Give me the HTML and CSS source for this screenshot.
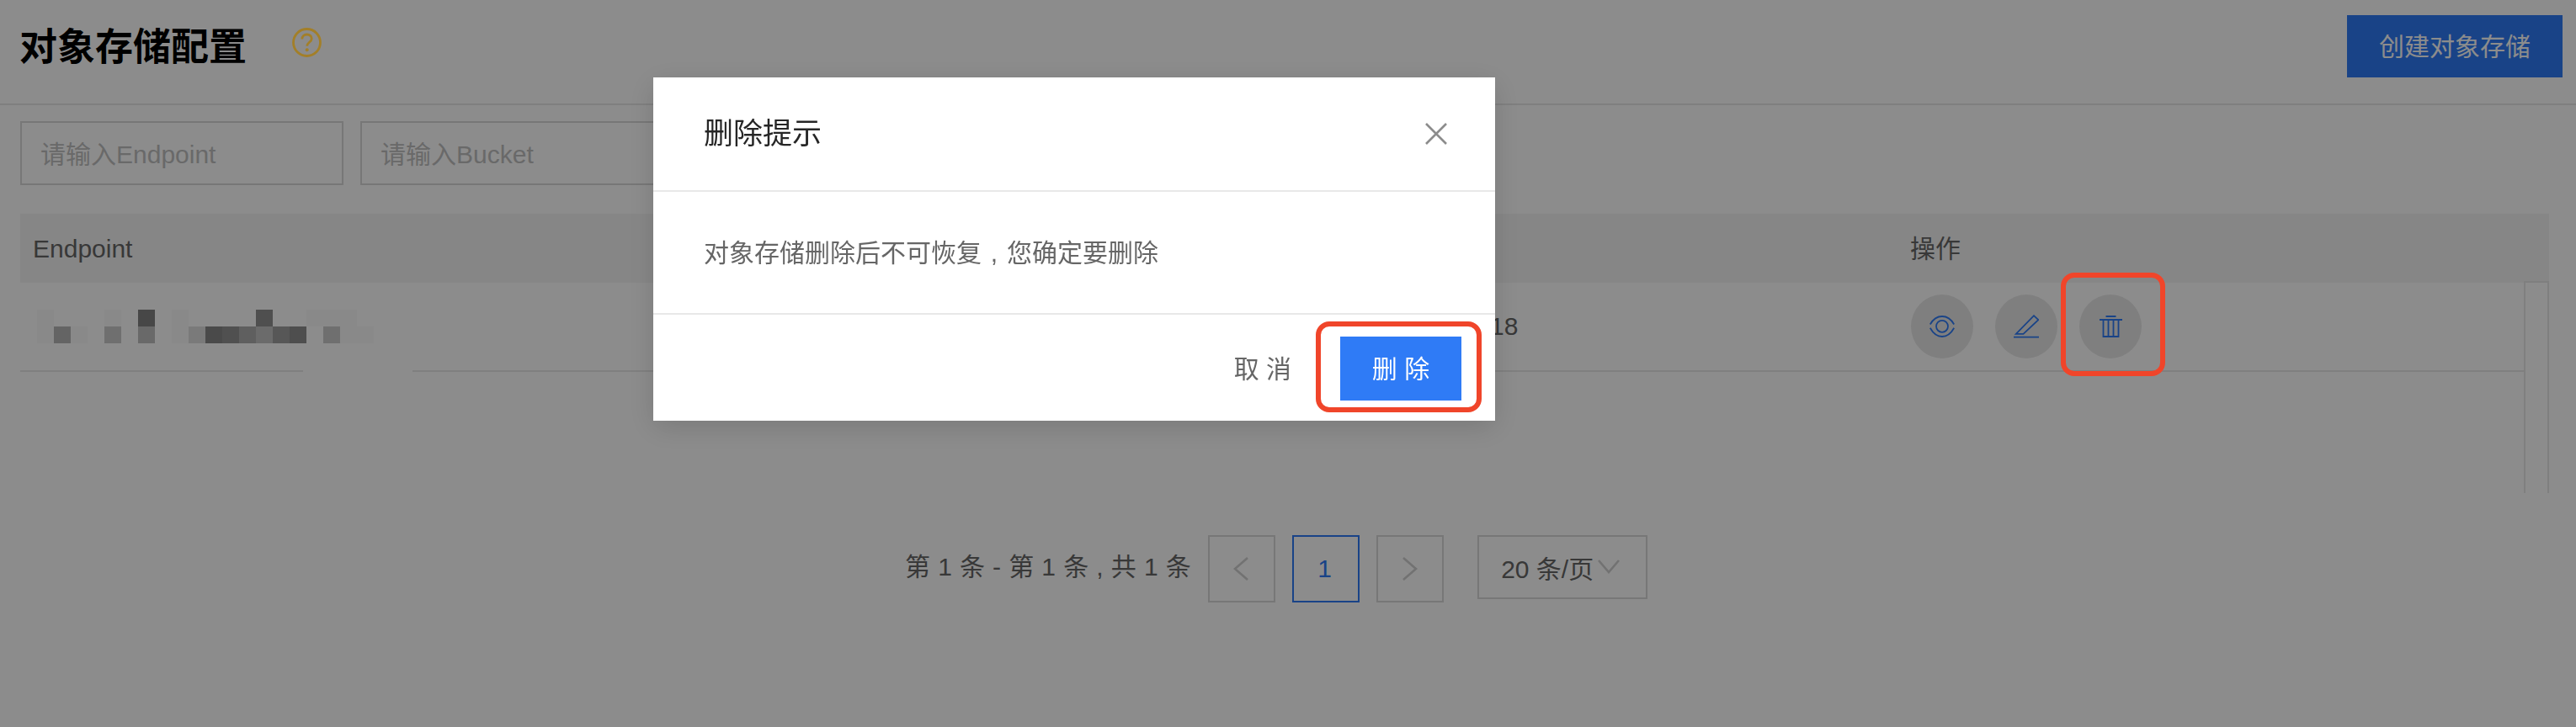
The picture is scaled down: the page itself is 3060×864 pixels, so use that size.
FILE: index.html
```html
<!DOCTYPE html>
<html lang="zh-CN">
<head>
<meta charset="utf-8">
<title>对象存储配置</title>
<link rel="stylesheet" href="styles.css">
</head>
<body>
<main class="page">
  <header class="top">
    <div class="top-left">
      <h1 class="title">对象存储配置</h1>
      <svg class="help" viewBox="0 0 35 35" fill="none"><circle cx="17.5" cy="17.5" r="16" stroke-width="2.8"/><path d="M11.8 13.6c0-3.400 2.500-5.600 5.800-5.600 3.300 0 5.600 2.100 5.600 4.900 0 4.200-5.500 4.500-5.500 8.800" stroke-width="2.800"/><circle class="help-dot" cx="17.700" cy="26.300" r="2"/></svg>
    </div>
    <button class="btn-primary create">创建对象存储</button>
  </header>

  <section class="filters">
    <input class="field" placeholder="请输入Endpoint">
    <input class="field" placeholder="请输入Bucket">
  </section>

  <section class="table">
    <div class="thead cols">
      <span class="th">Endpoint</span>
      <span class="th">创建时间</span>
      <span class="th th-ops">操作</span>
    </div>
    <div class="tbody">
      <div class="row cols">
        <div class="mosaic">
          <i class="f"></i><i></i><i></i><i></i><i class="f"></i><i></i><i class="a"></i><i></i><i class="f"></i><i></i><i></i><i></i><i></i><i class="b"></i><i></i><i></i><i class="f"></i><i class="f"></i><i class="f"></i><i></i>
          <i class="f"></i><i class="g"></i><i class="f"></i><i></i><i class="h"></i><i></i><i class="j"></i><i></i><i class="f"></i><i class="k"></i><i class="c"></i><i class="d"></i><i class="l"></i><i class="m"></i><i class="e"></i><i class="n"></i><i></i><i class="h"></i><i class="f"></i><i class="f"></i>
        </div>
        <span class="td">2021-11-25 17:30:18</span>
        <div class="ops">
          <button class="op"><svg class="ico" width="30" height="26" viewBox="0 0 30 26" fill="none"><path d="M.8 10.500C4.500 4 9.500 1 15 1s10.500 3 14.200 9.500M.8 14.800C4.500 21.500 9.500 25 15 25s10.500-3.500 14.200-10.200"/><circle cx="15" cy="12.800" r="7"/></svg></button>
          <button class="op"><svg class="ico" width="30" height="28" viewBox="0 0 30 28" fill="none"><path d="M2.800 22.800 24 1.200l5.300 5L11.500 22.800zM0 26.700h30"/></svg></button>
          <button class="op"><svg class="ico" width="27" height="26" viewBox="0 0 27 26" fill="none"><path d="M7.500 1h12M0 5h27M4.500 5v20h18V5M10.500 5v20M16.500 5v20"/></svg></button>
        </div>
      </div>
      <span class="line-gap"></span>
      <div class="scrollbar"></div>
    </div>
  </section>

  <nav class="pager">
    <span class="pager-total">第 1 条 - 第 1 条 , 共 1 条</span>
    <span class="pg"><svg class="chev chev-prev" width="18" height="28" viewBox="0 0 18 28" fill="none"><path d="M17 1 2 14l15 13"/></svg></span>
    <span class="pg pg-on">1</span>
    <span class="pg"><svg class="chev" width="18" height="28" viewBox="0 0 18 28" fill="none"><path d="m1 1 15 13L1 27"/></svg></span>
    <span class="size">20 条/页<svg class="chev chev-size" width="26" height="17" viewBox="0 0 26 17" fill="none"><path d="m1 1 12 14L25 1"/></svg></span>
  </nav>
</main>

<div class="mask"></div>

<div class="modal">
  <div class="modal-head">
    <span class="modal-title">删除提示</span>
    <svg class="close" width="26" height="26" viewBox="0 0 26 26" fill="none"><path d="m1 1 24 24M25 1 1 25"/></svg>
  </div>
  <div class="modal-body"><span>对象存储删除后不可恢复<span class="comma">,</span>您确定要删除</span></div>
  <div class="modal-foot">
    <button class="btn-text">取 消</button>
    <button class="btn-primary confirm">删 除</button>
  </div>
</div>

<div class="mark mark-trash"></div>
<div class="mark mark-confirm"></div>
</body>
</html>
```
FILE: styles.css
```css
* { box-sizing: border-box; }
html, body { margin: 0; height: 100%; background: #fff; overflow: hidden; }
body, button, input {
  font-family: "Liberation Sans", "Noto Sans CJK SC", sans-serif;
  font-size: 30px;
}
button { border: 0; padding: 0; background: none; }

.top {
  height: 125px;
  padding: 18px 16px 0 23px;
  border-bottom: 2px solid #e8e8e8;
  display: flex;
  justify-content: space-between;
  align-items: flex-start;
}
.top-left { display: flex; align-items: flex-start; gap: 54px; }
.title { margin: 10px 0 0; font-size: 45px; line-height: 58px; font-weight: 700; color: #000; }
.help {
  width: 35px; height: 35px; margin-top: 15px;
  stroke: #a37f28;
  position: relative; z-index: 2;
}
.help-dot { fill: #a37f28; stroke: none; }

.btn-primary { background: #2f7bf6; color: #fff; height: 74px; }
.create { width: 256px; padding-bottom: 4px; }

.filters { display: flex; gap: 20px; padding: 19px 24px 0; }
.field {
  width: 384px; height: 76px;
  border: 2px solid #d9d9d9;
  padding: 4px 22px 0;
  outline: 0;
  color: #555;
}
.field::placeholder { color: #bfbfbf; opacity: 1; }

.table { margin: 34px 32px 0 24px; }
.cols { display: grid; grid-template-columns: 1500px 745px 1fr; align-items: center; }
.thead { height: 82px; background: #f5f5f5; }
.th { padding: 2px 0 0 15px; color: #666; line-height: 36px; }
.th-ops { padding-left: 0; }
.tbody { position: relative; height: 250px; padding-right: 30px; }
.row { height: 106px; border-bottom: 2px solid #e8e8e8; }
.td { color: #666; padding-left: 3px; line-height: 36px; }
.line-gap { position: absolute; left: 336px; top: 104px; width: 130px; height: 2px; background: #fff; }
.scrollbar {
  position: absolute; right: 0; top: -2px;
  width: 30px; height: 252px;
  border: 2px solid #e8e8e8; border-bottom: 0;
  background: #fff;
}

.mosaic { display: grid; grid-template-columns: repeat(20, 20px); grid-auto-rows: 20px; margin-left: 20px; width: 400px; }
.mosaic i { display: block; }
.mosaic .f { background: #fafafa; }
.mosaic .a { background: #818181; }
.mosaic .b { background: #919191; }
.mosaic .c { background: #878787; }
.mosaic .d { background: #939393; }
.mosaic .e { background: #9e9e9e; }
.mosaic .g { background: #b6b6b6; }
.mosaic .h { background: #cacaca; }
.mosaic .j { background: #bfbfbf; }
.mosaic .k { background: #dfdfdf; }
.mosaic .l { background: #adadad; }
.mosaic .m { background: #c4c4c4; }
.mosaic .n { background: #8f8f8f; }

.ops { display: flex; gap: 26px; margin-left: 1px; }
.op {
  width: 74px; height: 76px;
  border-radius: 50%;
  background: #e8e8e8;
  display: flex; align-items: center; justify-content: center;
}
.ico { stroke: #2f7bf6; stroke-width: 1.8; }

.pager { display: flex; align-items: flex-start; padding-left: 1075px; margin-top: 50px; color: #666; }
.pager-total { line-height: 76px; letter-spacing: .4px; margin-right: 20px; }
.pg {
  width: 80px; height: 80px; margin-right: 20px;
  border: 2px solid #d9d9d9;
  display: flex; align-items: center; justify-content: center;
}
.pg-on { border-color: #2f7bf6; color: #2f7bf6; padding-right: 3px; }
.size {
  margin-left: 20px; width: 202px; height: 76px;
  border: 2px solid #d9d9d9;
  padding-left: 26px;
  display: flex; align-items: center;
  white-space: nowrap;
}
.chev { stroke: #cfcfcf; stroke-width: 2.6; }
.chev-prev { margin-right: 3px; }
.chev-size { margin-left: 5px; margin-top: -2px; flex: none; }

.mask { position: fixed; inset: 0; background: rgba(0, 0, 0, .45); z-index: 1; }

.modal {
  position: fixed; left: 776px; top: 92px; z-index: 3;
  width: 1000px; height: 408px;
  background: #fff;
  box-shadow: 0 8px 32px rgba(0, 0, 0, .14);
  display: flex; flex-direction: column;
}
.modal-head {
  height: 136px; flex: none;
  padding: 0 57px 0 60px;
  border-bottom: 2px solid #e8e8e8;
  display: flex; align-items: center; justify-content: space-between;
}
.modal-title { font-size: 35px; line-height: 44px; color: #262626; }
.close { stroke: #8c8c8c; stroke-width: 2.6; }
.modal-body {
  height: 146px; flex: none;
  padding: 0 0 5px 60px;
  border-bottom: 2px solid #e8e8e8;
  display: flex; align-items: center;
  color: #666;
}
.comma { display: inline-block; width: 30px; text-align: center; }
.modal-foot {
  flex: 1;
  padding: 26px 40px 0 0;
  display: flex; justify-content: flex-end; align-items: flex-start; gap: 58px;
}
.btn-text { height: 76px; color: #666; padding-bottom: 5px; }
.confirm { width: 144px; height: 76px; padding-bottom: 5px; }

.mark { position: fixed; z-index: 4; border: 6px solid #f0452a; border-radius: 16px; }
.mark-trash { left: 2448px; top: 324px; width: 124px; height: 123px; }
.mark-confirm { left: 1563px; top: 382px; width: 197px; height: 108px; }
```
